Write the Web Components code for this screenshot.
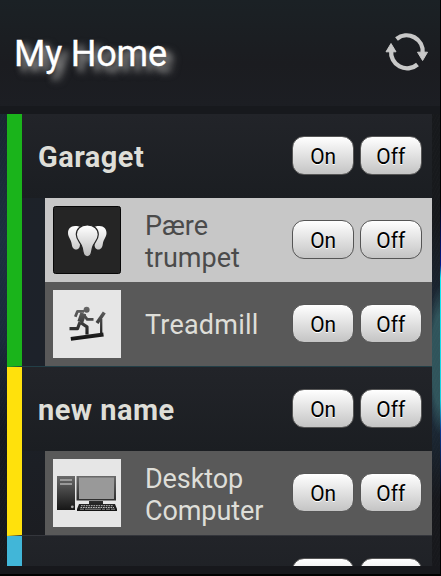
<!DOCTYPE html>
<html lang="da"><head><meta charset="utf-8"><title>My Home</title>
<style>html,body{margin:0;height:100%;overflow:hidden;background:#000}</style></head>
<body>
<home-screen>
  <home-header slot="header">My Home</home-header>
  <room-group name="Garaget" style="--bar:#1ab41b;--line:#233f47">
    <device-row active icon="bulbs">Pære<br>trumpet</device-row>
    <device-row icon="treadmill"><span style="letter-spacing:.2px;position:relative;top:-1px">Treadmill</span></device-row>
  </room-group>
  <room-group name="new name" style="--bar:#ffe10c;--line:#34363c">
    <device-row icon="computer"><span style="letter-spacing:-.1px">Desktop<br>Computer</span></device-row>
  </room-group>
  <room-group name="" style="--bar:#41b6d8"></room-group>
</home-screen>
<script>
const ICONS = {
  bulbs: `<svg viewBox="0 0 68 68"><defs><linearGradient id="b" x1="0" y1="20" x2="0" y2="50" gradientUnits="userSpaceOnUse"><stop stop-color="#fff"/><stop offset="1" stop-color="#bcbcbc"/></linearGradient></defs>
    <rect x=".5" y=".5" width="67" height="67" rx="2" fill="#252525" stroke="#080808"/>
    <g fill="url(#b)"><path d="M22 20C17.500 20 15 23 15 27C15 31 18 33 18.700 38C19 41 20.500 43.500 23 43.500C26 43.500 27 41 27 38L29 22C27 20.500 25 20 22 20Z"/><path d="M46.500 20C51 20 53.500 23 53.500 27C53.500 31 50.500 33 49.800 38C49.500 41 48 43.500 45.500 43.500C42.500 43.500 41.500 41 41.500 38L39.500 22C41.500 20.500 43.500 20 46.500 20Z"/>
    <path stroke="#252525" stroke-width="1.200" d="M34.300 19C27.500 19 23.300 23 23.300 28.500C23.300 34.500 28.200 36.500 29.300 42C30 46.500 30.500 50.800 34.300 50.800C38.100 50.800 38.600 46.500 39.300 42C40.400 36.500 45.300 34.500 45.300 28.500C45.300 23 41.100 19 34.300 19Z"/></g></svg>`,
  treadmill: `<svg viewBox="0 0 68 68"><defs><linearGradient id="t" x1="0" y1="17" x2="0" y2="50" gradientUnits="userSpaceOnUse"><stop stop-color="#686868"/><stop offset="1" stop-color="#111"/></linearGradient></defs><rect width="68" height="68" fill="#e6e6e6"/>
    <g stroke="url(#t)" fill="none" stroke-linejoin="round"><path stroke-width="2.800" d="M22.300 26.800L24.500 21.300H31M31 25L34.200 29.300H40.500"/><path stroke-width="6" d="M30.300 23.300L27.300 32"/><path stroke-width="3.200" d="M27 32L24.500 38.700H16.500M27.500 32.500L34 36.800V44.500"/><path stroke-width="3.800" d="M17.800 48.900L50.500 44.500"/><path stroke-width="2.300" d="M48.200 44V29"/><path stroke-width="3.500" d="M44 33L51.300 22.600"/></g><circle cx="33.600" cy="19.700" r="3" fill="url(#t)"/></svg>`,
  computer: `<svg viewBox="0 0 68 68"><defs><linearGradient id="c" x1="0" y1="17" x2="0" y2="52" gradientUnits="userSpaceOnUse"><stop stop-color="#6a6a6a"/><stop offset="1" stop-color="#141414"/></linearGradient></defs><rect width="68" height="68" fill="#e6e6e6"/>
    <path fill="url(#c)" d="M4 17H22V51H4ZM23.500 17H63V41.500H23.500ZM36 42H50V45H36ZM26 45H62L64 50V52H24V50Z"/><path fill="#999" d="M26 18.500H61V40H26ZM7 20H19V22H7ZM7 24H19V26H7Z"/><circle cx="19.300" cy="47.800" r="1.400" fill="#aaa"/><path d="M28 46.700H60M27.500 48.500H61" stroke="#bbb" stroke-width="1" stroke-dasharray="1.700 .8"/><path d="M27 50.200H62" stroke="#aaa" stroke-width=".8" stroke-dasharray="4 1 16 1 3 1"/></svg>`
};
function define(name, html, setup) {
  const template = document.createElement('template');
  template.innerHTML = html;
  customElements.define(name, class extends HTMLElement {
    constructor() { super(); this.attachShadow({mode:'open'}).append(template.content.cloneNode(true)); }
    connectedCallback() { setup?.(this, this.shadowRoot); }
  });
}
define('push-button', `<style>
:host{display:flex;box-sizing:border-box;width:62px;height:39px;border:1px solid #555;border-radius:12px;background:linear-gradient(#fff,#c4c4c4);color:#000;font:21.300px/39px Roboto,sans-serif;justify-content:center;text-shadow:0 1px 0 #fff}
span{transform:scaleX(.98)}
</style><span><slot></slot></span>`);
define('switch-pair', `<style>:host{display:flex;gap:6px;padding-right:10.500px;margin-bottom:1px;flex:none}push-button+push-button{width:61.500px}</style><push-button>On</push-button><push-button>Off</push-button>`);
define('device-row', `<style>
:host{display:flex;box-sizing:border-box;height:84px;margin-left:23px;padding-left:8px;align-items:center;background:#595959;color:#deded8;font:27px/32px Roboto,sans-serif}
:host([active]){background:#c7c7c7;color:#4b4b4b}
.icon{width:68px;height:68px;flex:none}.icon svg{display:block;width:68px;height:68px}
.label{flex:1;padding:4px 0 0 24px;white-space:nowrap}
</style><div class="icon"></div><div class="label"><slot></slot></div><switch-pair></switch-pair>`,
(el, root) => { root.querySelector('.icon').innerHTML = ICONS[el.getAttribute('icon')]; });
define('room-group', `<style>
:host{display:block;border-left:15px solid var(--bar);border-bottom:1px solid var(--line,#333);flex:none}
.head{display:flex;height:84px;align-items:center;padding-left:16px;background:linear-gradient(#222429,#1b1e22);color:#deded8;font:bold 29px/32px Roboto,sans-serif;letter-spacing:.450px}
switch-pair{letter-spacing:0}
h2{flex:1;margin:0;padding-top:2px;font:inherit}
</style><div class="head"><h2></h2><switch-pair></switch-pair></div><slot></slot>`,
(el, root) => {
  const name = el.getAttribute('name');
  root.querySelector('h2').textContent = name;
  if (!name) root.querySelector('switch-pair').shadowRoot.querySelectorAll('push-button').forEach(b => b.textContent = '');
});
define('home-header', `<style>
:host{display:flex;box-sizing:border-box;height:106px;padding:0 11px 0 14px;justify-content:space-between;background:linear-gradient(#1b2125,#1b1c20 60%,#1c1e23);color:#fff;font:36px/42px Roboto,sans-serif}
h1{font:inherit;letter-spacing:-.2px;margin:33px 0 0;-webkit-text-stroke:.3px #fff;text-shadow:5px 5px 6px #888,7px 6px 8px #777}
svg{width:44px;height:44px;margin-top:29px}
</style><h1><slot></slot></h1><svg viewBox="0 0 44 44"><g fill="none" stroke="#c8c8c8" stroke-width="4.300"><path d="M11.500 10A16 16 0 0 1 37.600 24"/><path d="M32.500 35.500A16 16 0 0 1 6.200 21.500"/></g><path fill="#c8c8c8" stroke="#c8c8c8" stroke-linejoin="round" d="M32.500 23.200H42.500L37.600 31.500ZM1 22.800H11L6 14.500Z"/></svg>`);
define('home-screen', `<style>
:host{display:flex;flex-direction:column;box-sizing:border-box;width:441px;height:576px;border-right:1px solid #000;border-bottom:2px solid #000;background:
repeating-linear-gradient(115deg,#ffffff03 0 1px,transparent 1px 3px),
radial-gradient(ellipse 14px 75px at 440px 360px,#30545b 0 60%,transparent),
linear-gradient(#192630 110px,#1c3040 240px,#1a2a3b 340px,#15191f 430px,#17181c) 0 0/7px 100% no-repeat,
linear-gradient(#17191c 220px,#1a2430 290px,#1b2937 420px,#17181c 500px)}
:host::after{content:"";position:absolute;left:440px;top:0;width:1px;height:576px;background:linear-gradient(#000 200px,#001888 265px,#10eaf4 278px,#18cfe0 400px,#0a3790 430px,#000 500px)}
.band{height:8px;background:#17191d}
.list{display:flex;flex-direction:column;height:452px;margin:0 8px 0 7px;overflow:hidden;background:linear-gradient(#1d2228,#1d222a 250px,#1b1c20)}
.foot{flex:1;background:#17181c}
</style><slot name="header"></slot><div class="band"></div><div class="list"><slot></slot></div><div class="foot"></div>`);
</script></body></html>
